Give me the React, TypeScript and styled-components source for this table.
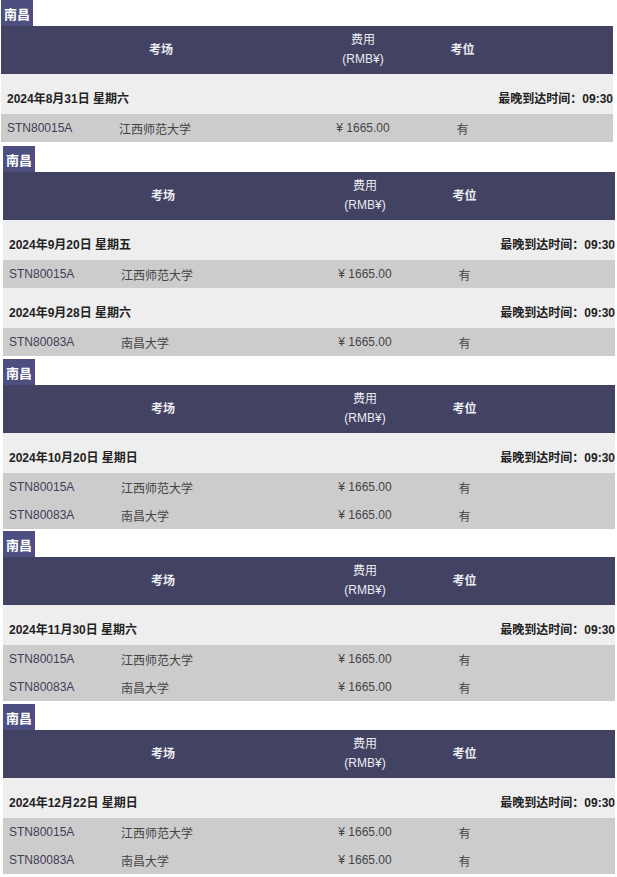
import React from "react";
import styled, { createGlobalStyle } from "styled-components";

const Global = createGlobalStyle`
  html, body { margin: 0; padding: 0; background: #fff; }
  body { font-family: "Liberation Sans", Arial, "Noto Sans CJK SC", sans-serif; font-size: 12px; }
`;

const Page = styled.div`
  display: flex;
  flex-direction: column;
  width: 617px;
`;

const Block = styled.section<{ $shift: number; $gap: number }>`
  display: flex;
  flex-direction: column;
  width: 612px;
  margin-left: ${(p) => p.$shift}px;
  margin-top: ${(p) => p.$gap}px;
`;

const CityTag = styled.div`
  align-self: flex-start;
  height: 26px;
  padding: 0 3px;
  display: flex;
  align-items: center;
  background: #4c4f7f;
  color: #fff;
  font-weight: bold;
  font-size: 13px;
`;

const HeadRow = styled.div`
  display: grid;
  grid-template-columns: 320px 84px 115px 1fr;
  height: 48px;
  background: #424363;
  color: #ececf2;
  align-items: center;
`;

const HeadCell = styled.div<{ $bold?: boolean }>`
  text-align: center;
  font-weight: ${(p) => (p.$bold ? "bold" : "normal")};
  line-height: 19px;
`;

const DateRow = styled.div`
  display: flex;
  justify-content: space-between;
  align-items: flex-end;
  height: 40px;
  box-sizing: border-box;
  padding: 0 0 8px 6px;
  background: #eeeeee;
  color: #222;
  font-weight: bold;
  line-height: 14px;
`;

const Rows = styled.div`
  display: flex;
  flex-direction: column;
  background: #cccccc;
`;

const DataRow = styled.div`
  display: grid;
  grid-template-columns: 112px 208px 84px 115px 1fr;
  height: 28px;
  align-items: center;
  color: #444;
`;

const Cell = styled.div<{ $center?: boolean }>`
  padding-left: ${(p) => (p.$center ? 0 : 6)}px;
  text-align: ${(p) => (p.$center ? "center" : "left")};
`;

const CodeCell = styled(Cell)`
  color: #3f4058;
`;

type Session = { date: string; rows: { code: string; venue: string }[] };

const JX = { code: "STN80015A", venue: "江西师范大学" };
const NC = { code: "STN80083A", venue: "南昌大学" };

const blocks: Session[][] = [
  [{ date: "2024年8月31日 星期六", rows: [JX] }],
  [
    { date: "2024年9月20日 星期五", rows: [JX] },
    { date: "2024年9月28日 星期六", rows: [NC] },
  ],
  [{ date: "2024年10月20日 星期日", rows: [JX, NC] }],
  [{ date: "2024年11月30日 星期六", rows: [JX, NC] }],
  [{ date: "2024年12月22日 星期日", rows: [JX, NC] }],
];

const gaps = [0, 4, 3, 2, 3];

export default function App() {
  return (
    <Page>
      <Global />
      {blocks.map((sessions, i) => (
        <Block key={i} $shift={i === 0 ? 1 : 3} $gap={gaps[i]}>
          <CityTag>南昌</CityTag>
          <HeadRow>
            <HeadCell $bold>考场</HeadCell>
            <HeadCell>
              费用
              <br />
              (RMB¥)
            </HeadCell>
            <HeadCell $bold>考位</HeadCell>
            <HeadCell />
          </HeadRow>
          {sessions.map((s) => (
            <React.Fragment key={s.date}>
              <DateRow>
                <span>{s.date}</span>
                <span>最晚到达时间：09:30</span>
              </DateRow>
              <Rows>
                {s.rows.map((r) => (
                  <DataRow key={r.code}>
                    <CodeCell>{r.code}</CodeCell>
                    <Cell>{r.venue}</Cell>
                    <Cell $center>¥ 1665.00</Cell>
                    <Cell $center>有</Cell>
                    <Cell />
                  </DataRow>
                ))}
              </Rows>
            </React.Fragment>
          ))}
        </Block>
      ))}
    </Page>
  );
}
